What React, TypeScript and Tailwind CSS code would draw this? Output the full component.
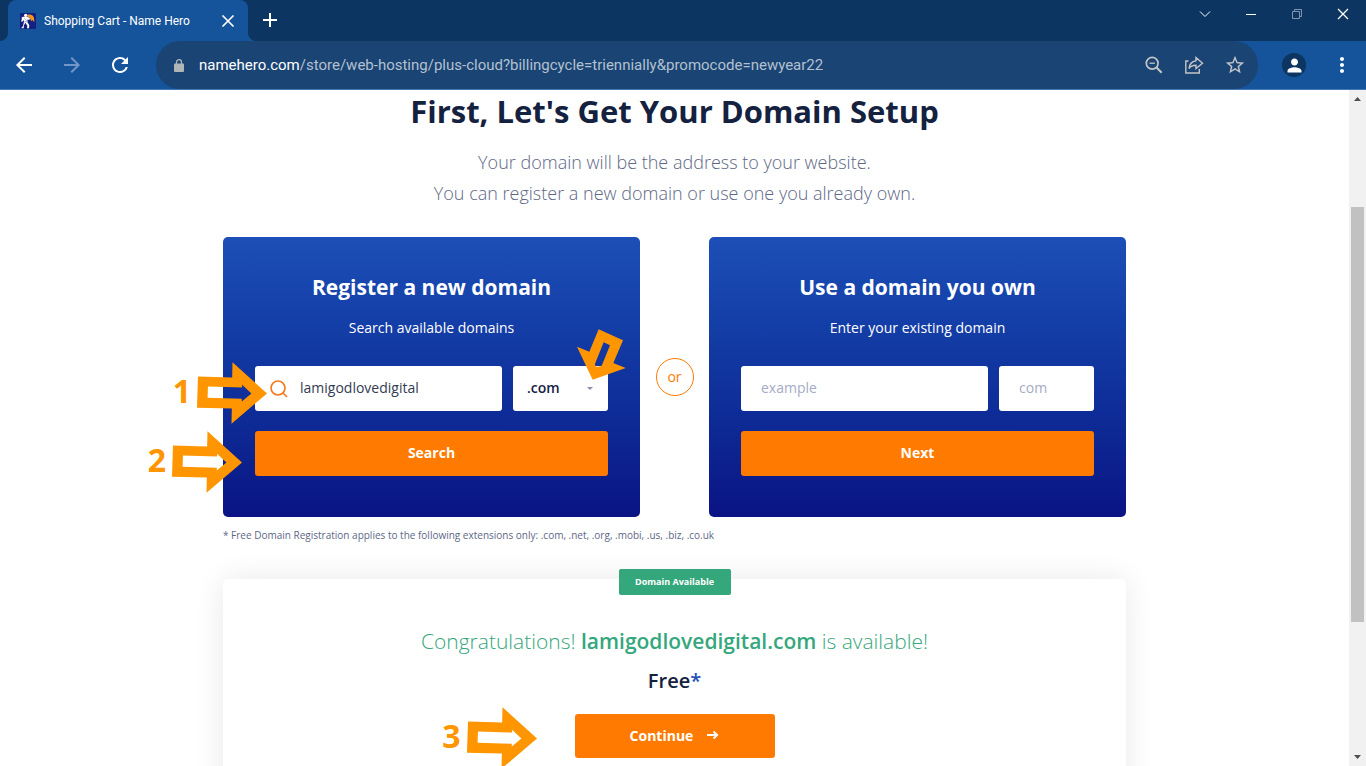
import { useState } from "react";
import type { ReactNode } from "react";
import { MdArrowBack, MdArrowForward, MdMoreVert, MdPerson, MdRefresh, MdStarBorder } from "react-icons/md";

const extensions = [".com", ".net", ".org", ".mobi", ".us", ".biz", ".co.uk"];

function Favicon() {
  return (
    <svg width="16" height="16" viewBox="0 0 48 48" className="shrink-0">
      <rect width="48" height="48" rx="4" fill="#14207f" />
      <path d="M22 6c8-3 17 0 20 8l1 14-6-7-3 4-4-10-7-3z" fill="#f7931e" />
      <circle cx="17" cy="7" r="5" fill="#fff" />
      <path
        d="M4 14l5-3 14 0 8 6-4 4-4-2-1 8 6 10-1 9h-6l1-8-6-9-4 8-1 9H5v-3l4-3 3-15-1-4-4 5-4-1 3-7z"
        fill="#fff"
      />
      <path d="M12 15l9 9M12 26h11" stroke="#8f9bd0" strokeWidth="2" />
    </svg>
  );
}

function TabStrip() {
  return (
    <div className="flex h-[41px] items-end bg-[#0c3561] pl-2 text-white">
      <div className="relative flex h-[41px] w-60 items-center rounded-t-lg bg-[#15549a] px-3">
        <svg width="8" height="8" viewBox="0 0 8 8" className="absolute bottom-0 -left-2">
          <path d="M8 0v8H0a8 8 0 0 0 8-8z" fill="#15549a" />
        </svg>
        <svg width="8" height="8" viewBox="0 0 8 8" className="absolute -right-2 bottom-0">
          <path d="M0 0v8h8a8 8 0 0 1-8-8z" fill="#15549a" />
        </svg>
        <Favicon />
        <span className="ml-2 flex-1 font-['Roboto',sans-serif] text-[12px] whitespace-nowrap">Shopping Cart - Name Hero</span>
        <button aria-label="Close tab">
          <svg width="16" height="16" viewBox="0 0 16 16" stroke="currentColor" strokeWidth="1.7">
            <path d="M2.5 2.5l11 11M13.5 2.5l-11 11" />
          </svg>
        </button>
      </div>
      <button aria-label="New tab" className="mb-3.5 ml-3.5">
        <svg width="16" height="14" viewBox="0 0 16 14" stroke="currentColor" strokeWidth="2">
          <path d="M8 0v14M1 7h14" />
        </svg>
      </button>
      <div className="mb-5 ml-auto flex items-center gap-[30px] pr-[15px]">
        <button aria-label="Search tabs">
          <svg width="16" height="14" viewBox="0 0 16 14" fill="none" stroke="currentColor">
            <path d="M3 4.5l5 5 5-5" />
          </svg>
        </button>
        <button aria-label="Minimize">
          <svg width="16" height="14" viewBox="0 0 16 14" stroke="currentColor">
            <path d="M3 7.5h10" />
          </svg>
        </button>
        <button aria-label="Restore" className="text-[#8095ad]">
          <svg width="16" height="14" viewBox="0 0 16 14" fill="none" stroke="currentColor">
            <path d="M3.5 4.5h7v7h-7zM5.5 4.5v-2h7v7h-2" />
          </svg>
        </button>
        <button aria-label="Close">
          <svg width="16" height="14" viewBox="0 0 16 14" stroke="currentColor" strokeWidth="1.3">
            <path d="M3 2l10 10M13 2L3 12" />
          </svg>
        </button>
      </div>
    </div>
  );
}

function Toolbar() {
  return (
    <div className="flex h-[49px] items-center border-b border-[#4478b4] bg-[#15549a] px-3 text-white">
      <button aria-label="Back"><MdArrowBack size={24} /></button>
      <button aria-label="Forward" className="ml-6 text-[#7396c6]"><MdArrowForward size={24} /></button>
      <button aria-label="Reload" className="ml-6"><MdRefresh size={24} /></button>
      <div className="ml-6 flex h-12 flex-1 items-center rounded-full bg-[#1a4473] pr-3 pl-[18px] text-[#c3c5c8]">
        <svg width="10" height="13" viewBox="0 0 10 13" className="shrink-0">
          <path d="M2.500 5.500V3.200a2.500 2.500 0 0 1 5 0v2.300" fill="none" stroke="#b1b5b7" strokeWidth="1.3" />
          <rect y="4.500" width="10" height="8.500" rx="1" fill="#b1b5b7" />
        </svg>
        <div className="ml-[15px] flex-1 font-['Roboto',sans-serif] text-[15px] whitespace-nowrap text-[#b3c0d0]">
          <span className="text-white">namehero.com</span>
          /store/web-hosting/plus-cloud?billingcycle=triennially&amp;promocode=newyear22
        </div>
        <div className="flex items-center gap-5">
          <button aria-label="Zoom">
            <svg width="20" height="20" viewBox="0 0 20 20" fill="none" stroke="currentColor" strokeWidth="1.7">
              <circle cx="8.200" cy="8.200" r="5.900" />
              <path d="M12.500 12.500l5.200 5.200" strokeWidth="2" />
              <path d="M5.500 8.200h5.400" strokeWidth="1.300" />
            </svg>
          </button>
          <button aria-label="Share">
            <svg width="20" height="20" viewBox="0 0 20 20" fill="none" stroke="currentColor" strokeWidth="1.4">
              <path d="M4.5 6H1.8v12h13.500v-4" />
              <path d="M12 2.500l6.500 5.700L12 13.500v-3.200c-3.500 0-5.500.9-7 3.200.5-4.500 3-7.200 7-7.800z" />
            </svg>
          </button>
          <button aria-label="Bookmark"><MdStarBorder size={22} /></button>
        </div>
      </div>
      <button aria-label="Profile" className="ml-6 flex size-6 items-center justify-center rounded-full bg-[#0c3561]">
        <MdPerson size={21} />
      </button>
      <button aria-label="Menu" className="ml-6"><MdMoreVert size={24} /></button>
    </div>
  );
}

function Scrollbar() {
  return (
    <div className="flex w-[17px] shrink-0 flex-col items-center bg-[#f1f1f1] py-[7px]">
      <svg width="7" height="4" viewBox="0 0 7 4"><path d="M0 4L3.5 0 7 4z" fill="#505050" /></svg>
      <div className="mt-[106px] h-[415px] w-[13px] bg-[#c1c1c1]" />
      <svg width="7" height="4" viewBox="0 0 7 4" className="mt-auto"><path d="M0 0l3.5 4L7 0z" fill="#505050" /></svg>
    </div>
  );
}

// numbered pointer drawn over the page
function Step({ n, className }: { n: number; className: string }) {
  return (
    <div className={`pointer-events-none absolute z-10 flex items-center gap-1.5 ${className}`}>
      <span className="pb-1 text-[32px] leading-8 font-bold text-[#ff9500]">{n}</span>
      <svg width="70" height="62" viewBox="0 0 211 185">
        <path
          fillRule="evenodd"
          fill="#ff9500"
          d="M3 43l103 3 1-46 104 94-107 91 1-46-105-2zM33 73l-1 34 103 3v8l29-24-28-26v8z"
        />
      </svg>
    </div>
  );
}

function DomainPanel({ title, text, action, children }: { title: string; text: string; action: string; children: ReactNode }) {
  return (
    <form
      onSubmit={e => e.preventDefault()}
      className="rounded-[5px] bg-linear-to-b from-[#1c4fb7] to-[#0b1384] px-8 pt-8 pb-[41px] text-center text-white"
    >
      <h2 className="text-[21px] leading-9 font-bold">{title}</h2>
      <p className="mt-[11px] text-[14px] leading-6">{text}</p>
      <div className="relative mt-[26px] flex gap-[11px]">{children}</div>
      <button className="mt-5 h-[45px] w-full rounded-[3px] bg-[#ff7a00] pb-0.5 text-[14px] font-bold">{action}</button>
    </form>
  );
}

export default function App() {
  const [domain, setDomain] = useState("lamigodlovedigital");
  const [ext, setExt] = useState(".com");

  return (
    <div className="flex h-screen flex-col overflow-hidden bg-white font-['Open_Sans',sans-serif]">
      <TabStrip />
      <Toolbar />

      <div className="flex min-h-0 flex-1">
        <main className="flex-1 overflow-hidden">
          <div className="mx-auto max-w-[903px]">
            {/* Heading */}
            <h1 className="text-center text-[31px] leading-[42px] font-bold text-[#14213f]">
              First, Let's Get Your Domain Setup
            </h1>
            <p className="mt-[15px] text-center text-[18px] leading-[31px] font-light text-[#5d6785]">
              Your domain will be the address to your website.
              <br />
              You can register a new domain or use one you already own.
            </p>

            {/* Domain choices */}
            <div className="mt-7 grid grid-cols-[1fr_69px_1fr] items-center">
              <DomainPanel title="Register a new domain" text="Search available domains" action="Search">
                <Step n={1} className="-top-1 right-[341px]" />
                <Step n={2} className="top-[65px] right-[366px]" />
                <div className="relative min-w-0 flex-1">
                  <svg width="18" height="18" viewBox="0 0 18 18" fill="none" stroke="#f47b20" strokeWidth="1.7" className="absolute top-3.5 left-[15px]">
                    <circle cx="8" cy="8" r="7" />
                    <path d="M13 13l4 4" />
                  </svg>
                  <input
                    aria-label="Domain name"
                    value={domain}
                    onChange={e => setDomain(e.target.value)}
                    className="h-[45px] w-full rounded-[3px] bg-white pb-0.5 pl-[45px] text-[14px] text-[#333b52]"
                  />
                </div>
                <div className="relative w-[95px]">
                  <select
                    aria-label="Extension"
                    value={ext}
                    onChange={e => setExt(e.target.value)}
                    className="h-[45px] w-full appearance-none rounded-[3px] bg-white pb-0.5 pl-3.5 text-[14px] font-semibold text-[#14213f]"
                  >
                    {extensions.map(x => <option key={x}>{x}</option>)}
                  </select>
                  <svg width="6" height="3" viewBox="0 0 6 3" className="absolute top-[21px] right-[15px]">
                    <path d="M0 0h6L3 3z" fill="#8b91a3" />
                  </svg>
                  <svg width="49" height="51" viewBox="0 0 147 153" className="pointer-events-none absolute -top-[37px] left-16">
                    <path
                      fillRule="evenodd"
                      fill="#ff9500"
                      d="M65 1l73 33-29 68 37 15-99 35L0 53l37 15zM80 40L54 104c0 6 3 10 8 9 6 0 11-2 13-5L99 49z"
                    />
                  </svg>
                </div>
              </DomainPanel>

              <div className="mx-auto flex size-[38px] items-center justify-center rounded-full border border-[#ff7a00] pb-0.5 text-[14px] text-[#ff7a00]">
                or
              </div>

              <DomainPanel title="Use a domain you own" text="Enter your existing domain" action="Next">
                <input
                  aria-label="Your domain"
                  placeholder="example"
                  className="h-[45px] min-w-0 flex-1 rounded-[3px] bg-white px-5 pb-0.5 text-[14px] text-[#333b52] placeholder:text-[#a5abc6]"
                />
                <input
                  aria-label="Your extension"
                  placeholder="com"
                  className="h-[45px] w-[95px] rounded-[3px] bg-white px-5 pb-0.5 text-[14px] text-[#333b52] placeholder:text-[#a5abc6]"
                />
              </DomainPanel>
            </div>

            <p className="mt-2 text-[10px] leading-5 text-[#5d6785]">
              * Free Domain Registration applies to the following extensions only: .com, .net, .org, .mobi, .us, .biz, .co.uk
            </p>

            {/* Result */}
            <section className="relative mt-[34px] rounded-[5px] bg-white pt-[46px] pb-20 text-center shadow-[0_0_30px_rgba(0,0,0,0.09)]">
              <div className="absolute -top-2.5 left-1/2 h-[26px] w-28 -translate-x-1/2 rounded-[2px] bg-[#34a77c] text-[9px] leading-[26px] font-bold text-white">
                Domain Available
              </div>
              <p className="text-[21px] leading-8 font-light text-[#34a77c]">
                Congratulations! <b className="font-semibold">lamigodlovedigital.com</b> is available!
              </p>
              <p className="mt-2 text-[20px] leading-8 font-semibold text-[#14213f]">
                Free<span className="text-[#1c4fb7]">*</span>
              </p>
              <div className="relative mx-auto mt-[17px] w-[200px]">
                <Step n={3} className="-top-[7px] right-[238px]" />
                <button className="flex h-11 w-full items-center justify-center gap-3.5 rounded-[3px] bg-[#ff7a00] pb-0.5 text-[14px] font-bold text-white">
                  Continue
                  <svg width="12" height="10" viewBox="0 0 12 10" fill="none" stroke="currentColor" strokeWidth="1.8">
                    <path d="M0 5h10M6.5 1.5L10.2 5 6.5 8.5" />
                  </svg>
                </button>
              </div>
            </section>
          </div>
        </main>
        <Scrollbar />
      </div>
    </div>
  );
}
